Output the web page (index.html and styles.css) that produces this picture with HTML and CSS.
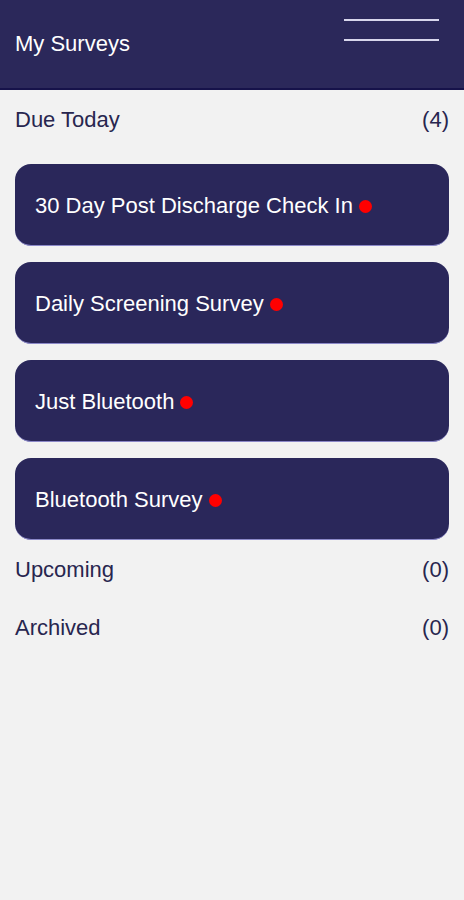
FILE: index.html
```html
<!DOCTYPE html>
<html lang="en">
    <head>
        <meta charset="utf-8" />
        <meta name="viewport" content="width=device-width, initial-scale=1.0" />
        <title>My Surveys</title>
        <link rel="stylesheet" href="styles.css">
    </head>

    <body>
        <header class="top-bar">
            <h1 class="title">My Surveys</h1>
            <div class="menu-btn">
                <span class="menu-line"></span>
                <span class="menu-line"></span>
            </div>
        </header>

        <div class="section-row">
            <span>Due Today</span>
            <span>(4)</span>
        </div>

        <div class="card-list">
            <div class="card">30 Day Post Discharge Check In <span class="dot"></span></div>
            <div class="card">Daily Screening Survey <span class="dot"></span></div>
            <div class="card">Just Bluetooth <span class="dot"></span></div>
            <div class="card">Bluetooth Survey <span class="dot"></span></div>
        </div>

        <div class="section-row">
            <span>Upcoming</span>
            <span>(0)</span>
        </div>
        <div class="section-row archived">
            <span>Archived</span>
            <span>(0)</span>
        </div>
    </body>
</html>
```

FILE: styles.css
```css
body {
    margin: 0;
    background: #f2f2f2;
    font-family: "Liberation Sans", Arial, sans-serif;
    color: #28264f;
}
.top-bar {
    height: 88px;
    background: #2b285a;
    border-bottom: 2px solid #16124a;
    display: flex;
    align-items: center;
    justify-content: space-between;
    padding: 0 25px 0 15px;
}
.title {
    margin: 0;
    font-size: 22px;
    font-weight: normal;
    color: #ffffff;
}
.menu-btn {
    display: flex;
    flex-direction: column;
    gap: 18px;
    align-self: flex-start;
    margin-top: 19px;
}
.menu-line {
    display: block;
    width: 95px;
    height: 2px;
    background: #d8d6ec;
}
.section-row {
    display: flex;
    justify-content: space-between;
    align-items: center;
    height: 60px;
    padding: 0 15px;
    font-size: 22px;
}
.section-row.archived {
    height: 56px;
}
.card-list {
    display: flex;
    flex-direction: column;
    gap: 16px;
    padding: 14px 15px 0 15px;
}
.card {
    height: 82px;
    background: #2a275a;
    border-radius: 16px;
    display: flex;
    align-items: center;
    padding: 3px 20px 0 20px;
    color: #ffffff;
    font-size: 22px;
    border-bottom: 1px solid #8b88c8;
    box-sizing: border-box;
}
.dot {
    display: inline-block;
    width: 13px;
    height: 13px;
    border-radius: 50%;
    background: #ff0000;
    margin-left: 6px;
}
```
